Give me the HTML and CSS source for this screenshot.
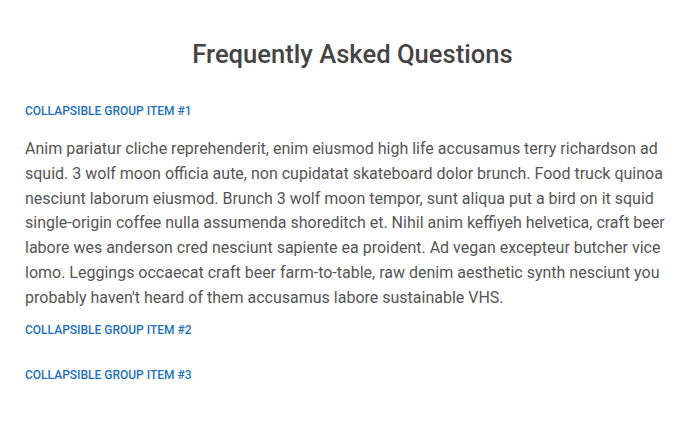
FILE: index.html
```html
<!DOCTYPE html>
<html>
<head>
<meta charset="utf-8">
<link rel="stylesheet" href="styles.css">
</head>
<body>
<div class="faq">
  <h2 class="faq-title">Frequently Asked Questions</h2>
  <div class="item open">
    <a class="item-head">Collapsible Group Item #1</a>
    <p class="item-body">Anim pariatur cliche reprehenderit, enim eiusmod high life accusamus terry richardson ad squid. 3 wolf moon officia aute, non cupidatat skateboard dolor brunch. Food truck quinoa nesciunt laborum eiusmod. Brunch 3 wolf moon tempor, sunt aliqua put a bird on it squid single-origin coffee nulla assumenda shoreditch et. Nihil anim keffiyeh helvetica, craft beer labore wes anderson cred nesciunt sapiente ea proident. Ad vegan excepteur butcher vice lomo. Leggings occaecat craft beer farm-to-table, raw denim aesthetic synth nesciunt you probably haven't heard of them accusamus labore sustainable VHS.</p>
  </div>
  <div class="item">
    <a class="item-head">Collapsible Group Item #2</a>
  </div>
  <div class="item">
    <a class="item-head">Collapsible Group Item #3</a>
  </div>
</div>
</body>
</html>
```
FILE: styles.css
```css
html, body { margin: 0; padding: 0; background: #fff; }
body { font-family: Roboto, "Liberation Sans", sans-serif; }
.faq { padding: 38px 17px 0 25px; width: 648px; }
.faq-title {
  margin: 0 0 33px 0;
  text-align: center;
  font-size: 25.6px;
  font-weight: 500;
  color: #444;
  line-height: 32px;
  padding-left: 7px;
}
.item-head {
  display: block;
  font-size: 12px;
  font-weight: 500;
  text-transform: uppercase;
  color: #1f70ba;
  line-height: 16px;
  padding-bottom: 29px;
}
.item.open .item-head { padding-bottom: 18px; }
.item-body {
  margin: 0 0 11px 0;
  font-size: 16px;
  line-height: 24.8px;
  color: #555;
}
```
